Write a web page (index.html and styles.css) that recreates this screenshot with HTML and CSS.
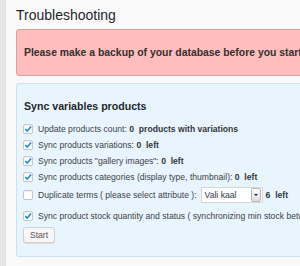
FILE: index.html
```html
<!doctype html>
<html lang="en">
<head>
    <meta charset="utf-8" />
    <title>Troubleshooting</title>
    <link rel="stylesheet" href="styles.css">
</head>
<body>
    <div class="page">
        <div class="sidebar"></div>
        <div class="wrap">
            <h1 class="title">Troubleshooting</h1>

            <!-- Warning -->
            <div class="notice-error">
                <p>Please make a backup of your database before you start</p>
            </div>

            <!-- Sync panel -->
            <div class="panel">
                <h2>Sync variables products</h2>

                <div class="opt">
                    <span class="cb checked"><svg viewBox="0 0 10 10"><path d="M2.2 5.1 4.2 7.1 8.1 2.6" /></svg></span>
                    <span>Update products count: <b>0&nbsp; products with variations</b></span>
                </div>
                <div class="opt">
                    <span class="cb checked"><svg viewBox="0 0 10 10"><path d="M2.2 5.1 4.2 7.1 8.1 2.6" /></svg></span>
                    <span>Sync products variations: <b>0&nbsp; left</b></span>
                </div>
                <div class="opt">
                    <span class="cb checked"><svg viewBox="0 0 10 10"><path d="M2.2 5.1 4.2 7.1 8.1 2.6" /></svg></span>
                    <span>Sync products "gallery images": <b>0&nbsp; left</b></span>
                </div>
                <div class="opt">
                    <span class="cb checked"><svg viewBox="0 0 10 10"><path d="M2.2 5.1 4.2 7.1 8.1 2.6" /></svg></span>
                    <span>Sync products categories (display type, thumbnail): <b>0&nbsp; left</b></span>
                </div>
                <div class="opt opt-select">
                    <span class="cb"></span>
                    <span>Duplicate terms ( please select attribute ):</span>
                    <span class="select">
                        <span class="select-value">Vali kaal</span>
                        <span class="select-arrow"></span>
                    </span>
                    <b>6&nbsp; left</b>
                </div>
                <div class="opt opt-stock">
                    <span class="cb checked"><svg viewBox="0 0 10 10"><path d="M2.2 5.1 4.2 7.1 8.1 2.6" /></svg></span>
                    <span>Sync product stock quantity and status ( synchronizing min stock between variations )</span>
                </div>

                <button class="button">Start</button>
            </div>
        </div>
    </div>
</body>
</html>
```

FILE: styles.css
```css
body {
    margin: 0;
    font-family: "Liberation Sans", Arial, sans-serif;
    background: #f9f9f9;
    color: #32373c;
}
.page {
    display: flex;
    height: 266px;
    overflow: hidden;
}
.sidebar {
    flex: none;
    width: 5px;
    background: #e6e6e6;
    border-right: 1px solid #e0e0e0;
}
.wrap {
    flex: none;
    width: 440px;
    padding-left: 10px;
}
.title {
    margin: 0;
    padding-top: 6px;
    font-size: 14px;
    font-weight: normal;
    line-height: 18px;
    color: #23282d;
}
.notice-error {
    margin-top: 5px;
    background: #ffbdbd;
    border: 1px solid #e59c9c;
    border-radius: 3px;
}
.notice-error p {
    margin: 0;
    padding: 16px 7px;
    font-size: 10.4px;
    font-weight: bold;
    line-height: 13px;
    color: #33302f;
}
.panel {
    margin-top: 7px;
    padding: 0 6px 13px;
    background: #e9f5fc;
    border: 1px solid #c9e2f1;
    border-radius: 3px;
}
.panel h2 {
    margin: 0 0 8px;
    padding-top: 15px;
    padding-left: 1px;
    font-size: 10.6px;
    line-height: 14px;
    color: #23282d;
}
.opt {
    display: flex;
    align-items: center;
    height: 16px;
    font-size: 8.6px;
    white-space: nowrap;
    color: #3c434a;
}
.opt b {
    color: #32373c;
}
.opt-select {
    height: 19px;
}
.opt-stock {
    margin-top: 4px;
}
.cb {
    flex: none;
    display: flex;
    align-items: center;
    justify-content: center;
    width: 10px;
    height: 10px;
    margin-right: 5px;
    box-sizing: border-box;
    background: #fff;
    border: 1px solid #c3c6ca;
    border-radius: 2px;
    box-shadow: inset 0 1px 1px rgba(0,0,0,0.06);
}
.cb svg {
    width: 10px;
    height: 10px;
    flex: none;
}
.cb path {
    fill: none;
    stroke: #1e8cbe;
    stroke-width: 1.5;
}
.select {
    display: flex;
    align-items: center;
    width: 62px;
    height: 16px;
    margin: 1px 3px 0 4px;
    box-sizing: border-box;
    background: #fff;
    border: 1px solid #d6d6d6;
}
.select-value {
    flex: 1;
    padding-left: 3px;
    color: #32373c;
}
.select-arrow {
    position: relative;
    width: 8px;
    height: 12px;
    margin-right: 1px;
    background: linear-gradient(#fafafa, #dcdcdc);
    border: 1px solid #b8b8b8;
    border-radius: 2px;
}
.select-arrow::after {
    content: "";
    position: absolute;
    left: 2px;
    top: 5px;
    border-left: 2px solid transparent;
    border-right: 2px solid transparent;
    border-top: 2px solid #222;
}
.button {
    display: block;
    margin-top: 3px;
    width: 32px;
    height: 16px;
    padding: 0;
    font-family: "Liberation Sans", Arial, sans-serif;
    font-size: 8.6px;
    color: #555;
    background: #f7f7f7;
    border: 1px solid #d0d0d0;
    border-radius: 3px;
    box-shadow: 0 1px 0 #ddd;
}
```
